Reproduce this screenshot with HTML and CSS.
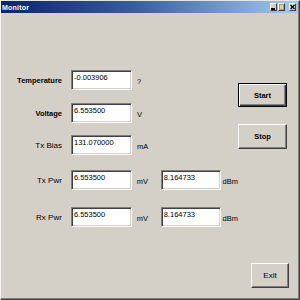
FILE: index.html
```html
<!DOCTYPE html>
<html lang="en">
<head>
  <meta charset="UTF-8" />
  <title>Monitor</title>
  <link rel="stylesheet" href="styles.css">
</head>
<body>

  <div class="window">
    <div class="titlebar">
      <span class="title">Monitor</span>
      <div class="controls">
        <span class="ctl min"><svg width="5" height="6" viewBox="0 0 5 6"><rect x="0" y="4" width="4" height="2" fill="#000"/></svg></span>
        <span class="ctl max"><svg width="5" height="6" viewBox="0 0 5 6"><rect x="0.5" y="0.5" width="4" height="5" fill="none" stroke="#9a978f"/></svg></span>
        <span class="ctl close"><svg width="5" height="6" viewBox="0 0 5 6"><path d="M0.5 1 L4.5 5 M4.5 1 L0.5 5" stroke="#000" stroke-width="1.2"/></svg></span>
      </div>
    </div>

    <div class="client">
      <div class="form">
        <div class="row">
          <span class="label bold">Temperature</span>
          <div class="edit">-0.003906</div>
          <span class="unit">?</span>
        </div>
        <div class="row r2">
          <span class="label bold">Voltage</span>
          <div class="edit">6.553500</div>
          <span class="unit">V</span>
        </div>
        <div class="row r3">
          <span class="label">Tx Bias</span>
          <div class="edit">131.070000</div>
          <span class="unit">mA</span>
        </div>
        <div class="row r4">
          <span class="label">Tx Pwr</span>
          <div class="edit">6.553500</div>
          <span class="unit">mV</span>
          <div class="edit second">8.164733</div>
          <span class="unit dbm">dBm</span>
        </div>
        <div class="row r5">
          <span class="label">Rx Pwr</span>
          <div class="edit">6.553500</div>
          <span class="unit">mV</span>
          <div class="edit second">8.164733</div>
          <span class="unit dbm">dBm</span>
        </div>
      </div>

      <div class="side">
        <button class="btn default">Start</button>
        <button class="btn stop">Stop</button>
        <button class="btn exit">Exit</button>
      </div>
    </div>
  </div>

</body>
</html>
```

FILE: styles.css
```css
* {
  margin: 0;
  padding: 0;
  box-sizing: border-box;
}

body {
  background-color: #d4d0c8;
  font-family: "Liberation Sans", Arial, sans-serif;
  color: #000;
}

.window {
  width: 300px;
  height: 300px;
  display: flex;
  flex-direction: column;
  background-color: #d4d0c8;
  border-left: 1px solid #f4f3f0;
  border-top: 1px solid #e6e4de;
  border-right: 1px solid #404040;
  border-bottom: 1px solid #404040;
  box-shadow: inset -1px -1px #808080;
}

.titlebar {
  height: 12px;
  margin-right: 1px;
  display: flex;
  align-items: center;
  justify-content: space-between;
  padding: 0 2px 0 1px;
  background: linear-gradient(to right, #0a246a, #3a5c9c 45%, #a6caf0);
}

.title {
  color: #fff;
  font-weight: bold;
  font-size: 7px;
  letter-spacing: 0.2px;
}

.controls {
  display: flex;
  gap: 1px;
}

.ctl {
  width: 7px;
  height: 8px;
  display: flex;
  align-items: center;
  justify-content: center;
  background-color: #d4d0c8;
  border-top: 1px solid #fff;
  border-left: 1px solid #fff;
  border-right: 1px solid #404040;
  border-bottom: 1px solid #404040;
}

.ctl.close {
  margin-left: 3px;
}

.client {
  flex: 1;
  display: flex;
  padding: 0 10px 11px 0;
}

.form {
  width: 237px;
  padding-top: 57px;
}

.row {
  display: flex;
  align-items: center;
  height: 20px;
}

.r2 { margin-top: 13px; }
.r3 { margin-top: 12px; }
.r4 { margin-top: 15px; }
.r5 { margin-top: 17px; }

.label {
  width: 61px;
  margin-right: 9px;
  text-align: right;
  font-size: 8px;
}

.label.bold {
  font-weight: bold;
  font-size: 7.5px;
}

.edit {
  width: 61px;
  height: 20px;
  align-self: flex-start;
  padding: 2px 0 0 2px;
  font-size: 7.5px;
  background-color: #fff;
  border-top: 1px solid #808080;
  border-left: 1px solid #808080;
  border-right: 1px solid #fff;
  border-bottom: 1px solid #fff;
  box-shadow: inset 1px 1px #404040, inset -1px -1px #d4d0c8;
}

.edit.second {
  width: 60px;
}

.unit {
  width: 29px;
  padding: 3px 0 0 5px;
  font-size: 7.5px;
}

.unit.dbm {
  width: auto;
  padding-left: 2px;
}

.side {
  width: 51px;
  display: flex;
  flex-direction: column;
  align-items: flex-start;
  padding-top: 70px;
}

.btn {
  width: 49px;
  height: 25px;
  font-family: "Liberation Sans", Arial, sans-serif;
  font-size: 7.5px;
  font-weight: bold;
  color: #000;
  background-color: #d4d0c8;
  border-top: 1px solid #fff;
  border-left: 1px solid #fff;
  border-right: 1px solid #404040;
  border-bottom: 1px solid #404040;
  box-shadow: inset -1px -1px #808080;
}

.btn.default {
  height: 24px;
  border: 1px solid #000;
  box-shadow: inset 1px 1px #fff, inset -1px -1px #404040, inset -2px -2px #808080;
}

.btn.stop {
  margin-top: 17px;
}

.btn.exit {
  margin-top: auto;
  align-self: flex-end;
  width: 38px;
  font-weight: normal;
  font-size: 8px;
}
```
